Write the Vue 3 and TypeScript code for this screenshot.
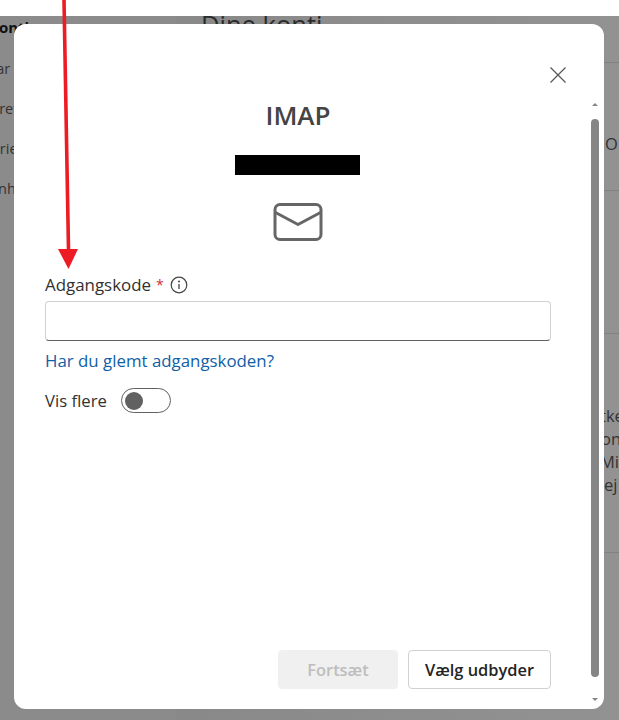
<script setup lang="ts">
// background text that peeks out behind the dialog, offsets are how far it slides left
const sideItems = [
  { text: 'Svar', offset: 19 },
  { text: 'Forretning', offset: 23 },
  { text: 'Kategorier', offset: 47 },
  { text: 'Enheder', offset: 10 },
]
const rightLines = [
  { text: 'tke', offset: 0 },
  { text: 'on', offset: 1 },
  { text: 'Mic', offset: 0 },
  { text: 'ej', offset: 4 },
]
</script>

<template>
  <div class="page">
    <div class="backdrop">
      <aside class="side">
        <div class="side-title">Konti</div>
        <div
          v-for="item in sideItems"
          :key="item.text"
          class="side-item"
          :style="{ marginLeft: `-${item.offset}px` }"
        >
          {{ item.text }}
        </div>
      </aside>
      <main class="main">
        <h2 class="main-title">Dine konti</h2>
        <div class="main-row row-a"></div>
        <div class="main-row row-b"><span class="peek">O</span></div>
        <div class="main-row row-c">
          <span
            v-for="line in rightLines"
            :key="line.text"
            class="peek-line"
            :style="{ marginLeft: `${line.offset}px` }"
          >
            {{ line.text }}
          </span>
        </div>
        <div class="main-row"></div>
      </main>
    </div>

    <section class="dialog">
      <button class="close" aria-label="Luk">
        <svg width="16" height="16" viewBox="0 0 16 16" fill="none" stroke="#555" stroke-width="1.2">
          <path d="M0.5 0.5l15 15M15.5 0.5l-15 15" />
        </svg>
      </button>

      <div class="scroll">
        <div class="content">
          <h1 class="title">IMAP</h1>
          <div class="redacted"></div>
          <svg class="mail" width="50" height="40" viewBox="0 0 50 40" fill="none" stroke="#666" stroke-width="3">
            <rect x="2" y="2.5" width="46" height="35" rx="5" />
            <path d="M2.5 10.5L25 22.5L47.5 10.5" stroke-linejoin="round" />
          </svg>

          <label class="label">
            Adgangskode <span class="req">*</span>
            <svg class="info" width="18" height="18" viewBox="0 0 18 18" fill="none">
              <circle cx="9" cy="9" r="7.8" stroke="#444" stroke-width="1.2" />
              <circle cx="9" cy="5.6" r="1" fill="#444" />
              <path d="M9 8v5" stroke="#444" stroke-width="1.3" />
            </svg>
          </label>
          <input class="field" type="password" />
          <a class="link" href="#">Har du glemt adgangskoden?</a>

          <div class="toggle-row">
            <span>Vis flere</span>
            <span class="toggle"><span class="knob"></span></span>
          </div>
        </div>

        <div class="actions">
          <button class="btn disabled" disabled>Fortsæt</button>
          <button class="btn secondary">Vælg udbyder</button>
        </div>
      </div>

      <div class="scrollbar">
        <span class="arrow-up"></span>
        <span class="thumb"></span>
        <span class="arrow-down"></span>
      </div>
    </section>

    <!-- Red annotation arrow drawn on top of the screenshot -->
    <svg class="annot" width="30" height="270" viewBox="0 0 30 270">
      <path d="M4 0L8.5 250" stroke="#ed1c24" stroke-width="3.6" fill="none" />
      <path d="M-2 249L18 249L8.5 269Z" fill="#ed1c24" />
    </svg>
  </div>
</template>

<style>
html,
body {
  margin: 0;
  background: #fff;
  overflow: hidden;
}
</style>

<style scoped>
.page {
  position: relative;
  width: 619px;
  height: 720px;
  overflow: hidden;
  font-family: "Open Sans", "Noto Sans", sans-serif;
  color: #323130;
}

/* Dimmed page behind the dialog */
.backdrop {
  display: flex;
  height: 704px;
  margin-top: 16px;
  background: linear-gradient(90deg, #858585, #929292);
  color: #2b2b2b;
}

.side {
  width: 176px;
  flex: none;
  background: #8b8b8b;
  overflow: hidden;
}

.side-title {
  margin-left: -11px;
  font-size: 15px;
  font-weight: 700;
  line-height: 22px;
  color: #111;
}

.side-item {
  margin-top: 18px;
  font-size: 14.5px;
  line-height: 22px;
  color: #333;
}

.side-title + .side-item {
  margin-top: 20px;
}

.main {
  flex: 1;
  padding-left: 25px;
  overflow: hidden;
}

.main-title {
  margin: -8px 0 0;
  font-size: 25.5px;
  font-weight: 400;
  line-height: 32px;
  color: #2b2b2b;
}

.main-row {
  margin-left: -25px;
  border-top: 1px solid #828282;
}

.row-a {
  margin-top: 22px;
  height: 127px;
}

.row-b {
  height: 142px;
}

.row-c {
  display: flex;
  flex-direction: column;
  height: 219px;
  padding-top: 70px;
  padding-left: 424px;
  box-sizing: border-box;
}

.peek {
  position: absolute;
  left: 605px;
  top: 134px;
  font-size: 16.5px;
  line-height: 20px;
  color: #333;
}

.peek-line {
  font-size: 16.5px;
  line-height: 23px;
  color: #333;
  white-space: nowrap;
}

.dialog {
  position: absolute;
  left: 14px;
  top: 24px;
  width: 590px;
  height: 685px;
  background: #fff;
  border-radius: 12px;
  display: flex;
}

.close {
  position: absolute;
  top: 43px;
  right: 38px;
  padding: 0;
  border: 0;
  background: none;
  line-height: 0;
}

.scroll {
  flex: 1;
  display: flex;
  flex-direction: column;
  padding: 0 40px 20px 31px;
  min-width: 0;
}

.content {
  flex: 1;
  display: flex;
  flex-direction: column;
  align-items: flex-start;
}

.title {
  align-self: center;
  margin: 74px 0 0;
  font-size: 26px;
  font-weight: 600;
  line-height: 34px;
  color: #444;
}

.redacted {
  width: 125px;
  height: 20px;
  margin: 23px 0 0 190px;
  background: #000;
}

.mail {
  align-self: center;
  margin-top: 27px;
}

.label {
  display: flex;
  align-items: center;
  gap: 5px;
  margin-top: 31px;
  font-size: 16.9px;
  line-height: 24px;
  color: #323130;
}

.req {
  font-size: 14px;
  color: #d13438;
}

.info {
  margin-left: 1px;
}

.field {
  width: 506px;
  height: 40px;
  margin-top: 4px;
  padding: 0 10px;
  box-sizing: border-box;
  border: 1px solid #d1d1d1;
  border-bottom-color: #616161;
  border-radius: 4px;
  background: #fff;
  outline: none;
}

.link {
  margin-top: 8px;
  font-size: 16.85px;
  line-height: 24px;
  color: #0f5ea8;
  text-decoration: none;
}

.toggle-row {
  display: flex;
  align-items: center;
  gap: 14px;
  margin-top: 15px;
  font-size: 16.7px;
  line-height: 24px;
}

.toggle {
  display: flex;
  align-items: center;
  width: 50px;
  height: 25px;
  padding: 0 3px;
  box-sizing: border-box;
  border: 1px solid #616161;
  border-radius: 13px;
}

.knob {
  width: 18px;
  height: 18px;
  border-radius: 50%;
  background: #616161;
}

.actions {
  display: flex;
  justify-content: flex-end;
  gap: 10px;
}

.btn {
  height: 39px;
  padding: 0;
  box-sizing: border-box;
  border: 1px solid #d1d1d1;
  border-radius: 4px;
  background: #fff;
  font-family: inherit;
  font-size: 16.4px;
  font-weight: 600;
  color: #242424;
}

.btn.secondary {
  width: 143px;
}

.btn.disabled {
  width: 120px;
  border-color: #f0f0f0;
  background: #f0f0f0;
  color: #bdbdbd;
}

/* Native looking scrollbar column */
.scrollbar {
  width: 8px;
  flex: none;
  margin-right: 5px;
  padding: 79px 0 8px;
  display: flex;
  flex-direction: column;
  align-items: center;
  box-sizing: border-box;
}

.thumb {
  flex: 1;
  width: 8px;
  margin: 13px 0 21px;
  border-radius: 4px;
  background: #858585;
}

.arrow-up,
.arrow-down {
  width: 0;
  height: 0;
  border-left: 3px solid transparent;
  border-right: 3px solid transparent;
}

.arrow-up {
  border-bottom: 3px solid #858585;
}

.arrow-down {
  border-top: 3px solid #858585;
}

.annot {
  position: absolute;
  left: 60px;
  top: 0;
  overflow: visible;
  pointer-events: none;
}
</style>
